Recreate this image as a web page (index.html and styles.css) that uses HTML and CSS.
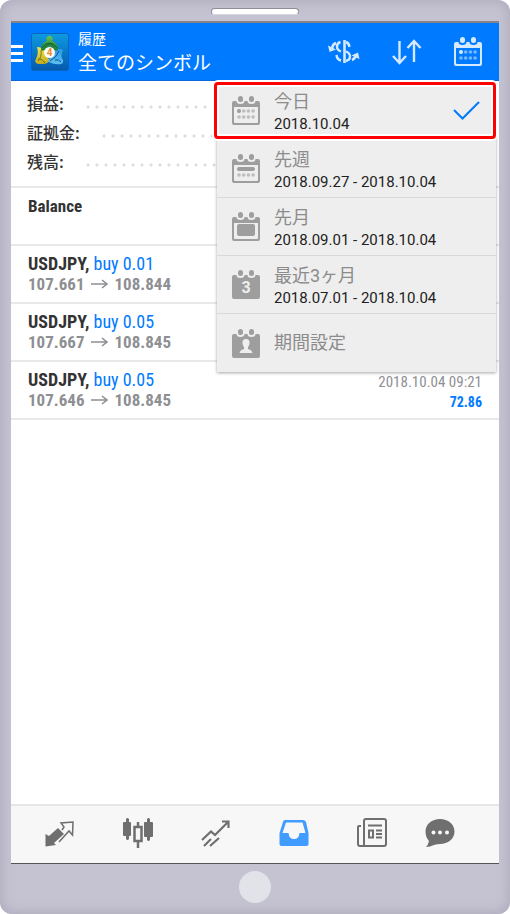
FILE: index.html
```
<!DOCTYPE html>
<html lang="ja">
<head>
<meta charset="utf-8">
<meta name="viewport" content="width=device-width, initial-scale=1">
<title>履歴</title>
<link rel="stylesheet" href="styles.css">
</head>
<body>
<svg class="defs" aria-hidden="true">
  <defs>
    <g id="cal-frame">
      <path fill-rule="evenodd" d="M2 5H4.500A4 3 0 0 0 12.500 5H15.500A4 3 0 0 0 23.500 5H26Q28 5 28 7V27Q28 29 26 29H2Q0 29 0 27V7Q0 5 2 5ZM2 11V26Q2 27 3 27H25Q26 27 26 26V11Z"/>
      <rect x="6" y="0" width="5" height="6" rx="2.5"/>
      <rect x="17" y="0" width="5" height="6" rx="2.5"/>
    </g>
    <g id="cal-solid">
      <path d="M2 5H4.500A4 3 0 0 0 12.500 5H15.500A4 3 0 0 0 23.500 5H26Q28 5 28 7V27Q28 29 26 29H2Q0 29 0 27V7Q0 5 2 5Z"/>
      <rect x="6" y="0" width="5" height="6" rx="2.5"/>
      <rect x="17" y="0" width="5" height="6" rx="2.5"/>
    </g>
    <g id="dots-row">
      <circle cx="7" cy="0" r="1.8"/><circle cx="11.7" cy="0" r="1.8"/><circle cx="16.4" cy="0" r="1.8"/><circle cx="21.1" cy="0" r="1.8"/>
    </g>
    <g id="to-arrow">
      <path d="M0 6H16M11 2L16 6L11 10" fill="none" stroke="currentColor" stroke-width="1.6"/>
    </g>
  </defs>
</svg>
<div class="phone">
  <div class="bezel-top"><span class="speaker"></span></div>
  <div class="screen">
    <header class="bar">
      <button class="burger" aria-label="メニュー"><span></span><span></span><span></span></button>
      <svg class="logo" viewBox="0 0 38 38" aria-hidden="true">
        <defs>
          <linearGradient id="lg" x1="0" y1="0" x2="0" y2="1"><stop offset="0" stop-color="#0d9be0"/><stop offset="1" stop-color="#0759ad"/></linearGradient>
          <linearGradient id="gr" x1="0" y1="0" x2="0" y2="1"><stop offset="0" stop-color="#6cc453"/><stop offset="1" stop-color="#157a38"/></linearGradient>
          <linearGradient id="ye" x1="0" y1="0" x2="0" y2="1"><stop offset="0" stop-color="#f2e650"/><stop offset="1" stop-color="#c2ab1c"/></linearGradient>
          <linearGradient id="bl" x1="0" y1="0" x2="0" y2="1"><stop offset="0" stop-color="#2f9be4"/><stop offset="1" stop-color="#5cc0f2"/></linearGradient>
        </defs>
        <rect x=".5" y=".5" width="37" height="37" rx="2" fill="url(#lg)" stroke="#0a63bd"/>
        <path d="M6 14Q11 14 14 18Q14 23 19 27Q17 31 12 31H7A3 3 0 0 1 5 26Q8 20 6 14Z" fill="url(#ye)"/>
        <path d="M24 17Q29 15 32 17Q29 23 32 27A3 3 0 0 1 30 31Q22 32 17 28L19 25Q23 23 24 17Z" fill="url(#bl)"/>
        <path d="M10 17Q10 10 16 8A3.200 3.200 0 1 1 21 8Q27 10 27 17Q23 19 18.500 13Q14 19 10 17Z" fill="url(#gr)"/>
        <path d="M11 15Q14 10 18.500 10Q23 10 26 15M14 14Q18.500 8 23 14" fill="none" stroke="#13602e"/>
        <path d="M10 17Q11 24 7 28M7 26Q11 25 14 30" fill="none" stroke="#7d741b"/>
        <path d="M28 18Q26 24 19 28M24 27Q28 26 30 29" fill="none" stroke="#0b559c"/>
        <circle cx="18.500" cy="19.500" r="5.500" fill="#fff"/>
        <text class="logo-num" x="18.500" y="23" text-anchor="middle">4</text>
      </svg>
      <h1 class="titles"><span class="sub">履歴</span><span class="main">全てのシンボル</span></h1>
      <nav class="actions">
        <button aria-label="通貨">
          <svg width="32" height="26" viewBox="0 0 32 26" fill="none" stroke="currentColor">
            <path d="M16.500 1V24" stroke-width="2.600"/>
            <path d="M12.500 3Q9 4 9 7.500Q9 11 13 12.500M18 3Q21 4 21.500 8M18 12.500Q22 14 22 17.500Q22 21 18 22M13 21.500Q9 20.500 8.500 16" stroke-width="2.400"/>
            <path d="M8 4Q5 5 4 9M24 21Q27 20 28 16" stroke-width="2.600"/>
            <path d="M0 6.500L1.500 13L8 10.500ZM23.500 16.500L30 13.500L31.500 20Z" fill="currentColor" stroke="none"/>
          </svg>
        </button>
        <button aria-label="並べ替え">
          <svg width="30" height="26" viewBox="0 0 30 26" fill="none" stroke="currentColor" stroke-width="2.400">
            <path d="M7.500 2V23M1 17L7.500 24L14 17M22 23V2M15.500 9L22 2L28.500 9"/>
          </svg>
        </button>
        <button aria-label="期間">
          <svg width="28" height="29" viewBox="0 0 28 29" fill="currentColor">
            <use href="#cal-frame"/>
            <circle cx="7" cy="15" r="2"/>
            <g opacity=".55"><use href="#dots-row" y="15"/><use href="#dots-row" y="21"/></g>
          </svg>
        </button>
      </nav>
    </header>

    <main class="content">
      <dl class="summary">
        <div><dt>損益:</dt><dd></dd></div>
        <div><dt>証拠金:</dt><dd></dd></div>
        <div><dt>残高:</dt><dd></dd></div>
      </dl>
      <ul class="deals">
        <li><div class="left"><p class="balance">Balance</p></div></li>
        <li><div class="left"><p class="sym"><b>USDJPY,</b> <span>buy 0.01</span></p><p class="price">107.661<svg viewBox="0 0 18 12" aria-hidden="true"><use href="#to-arrow"/></svg>108.844</p></div></li>
        <li><div class="left"><p class="sym"><b>USDJPY,</b> <span>buy 0.05</span></p><p class="price">107.667<svg viewBox="0 0 18 12" aria-hidden="true"><use href="#to-arrow"/></svg>108.845</p></div></li>
        <li><div class="left"><p class="sym"><b>USDJPY,</b> <span>buy 0.05</span></p><p class="price">107.646<svg viewBox="0 0 18 12" aria-hidden="true"><use href="#to-arrow"/></svg>108.845</p></div>
          <div class="right"><p class="time">2018.10.04 09:21</p><p class="profit">72.86</p></div></li>
      </ul>
    </main>

    <nav class="tabs">
      <button aria-label="気配値">
        <svg width="32" height="30" viewBox="0 0 32 30">
          <path fill="currentColor" d="M1.500 16L5 18L14 10L20 16L10 25L12 27L1.500 28.500Z"/>
          <path fill="none" stroke="currentColor" stroke-width="1.500" d="M18 12L20 9L17 5L29 4L28.500 17L25 13L15 24"/>
        </svg>
      </button>
      <button aria-label="チャート">
        <svg width="32" height="30" viewBox="0 0 32 30">
          <path fill="currentColor" d="M4 1Q5.500 -1 7 1V4H8Q9 4 9 5V17Q9 18 8 18H7V21Q5.500 23 4 21V18H2Q1 18 1 17V5Q1 4 2 4H4ZM25 1Q26.500 -1 28 1V4H30Q31 4 31 5V18Q31 19 30 19H28V22Q26.500 24 25 22V19H23Q22 19 22 18V5Q22 4 23 4H25Z"/>
          <path fill="none" stroke="currentColor" stroke-width="2.500" d="M16 4V9M16 24V30M12.500 9H19.500V23H12.500Z"/>
        </svg>
      </button>
      <button aria-label="トレード">
        <svg width="32" height="30" viewBox="0 0 32 30" fill="none" stroke="currentColor" stroke-width="2.200">
          <path d="M2 22L11 13.500L15 17L28 4M22 3.500H28.500V10M4 28L11 21M10 28L19 20"/>
        </svg>
      </button>
      <button class="active" aria-label="履歴">
        <svg width="32" height="30" viewBox="0 0 32 30">
          <path fill="currentColor" fill-rule="evenodd" d="M7 2H25Q27 2 28 4L30.500 15V26Q30.500 28 28.500 28H3.500Q1.500 28 1.500 26V15L5 4Q5.500 2 7 2ZM8 4.500L4.500 15H10.500Q11 21 16 21Q21 21 21.500 15H27.500L24.500 4.500Z"/>
        </svg>
      </button>
      <button aria-label="ニュース">
        <svg width="32" height="30" viewBox="0 0 32 30" fill="none" stroke="currentColor" stroke-width="2">
          <path d="M8 3Q8 1 10 1H28Q30 1 30 3V26Q30 28 28 28H4Q2 28 2 26V9Q2 8 3 8H5M8 3V28M12 7.500H26M20 12.500H26M20 16H26M20 19.500H26"/>
          <path d="M13 12.500H17V19.500H13Z"/>
        </svg>
      </button>
      <button aria-label="メッセージ">
        <svg width="32" height="30" viewBox="0 0 32 30">
          <path fill="currentColor" d="M16 1C24 1 30.500 6 30.500 13.500S24 26 16 26Q13 26 10 27Q6 29 2 29Q4 27 5 23Q1.500 19 1.500 13.500C1.500 6 8 1 16 1Z"/>
          <g fill="#f7f7f7"><circle cx="9.500" cy="14.500" r="2"/><circle cx="16" cy="14.500" r="2"/><circle cx="23" cy="14.500" r="2"/></g>
        </svg>
      </button>
    </nav>

    <div class="menu">
      <button class="item selected">
        <svg class="cal" viewBox="0 0 28 29"><use href="#cal-frame"/><circle cx="7" cy="15" r="2"/><g opacity=".6"><use href="#dots-row" y="15"/><use href="#dots-row" y="21"/></g></svg>
        <span class="text"><span class="name">今日</span><span class="range">2018.10.04</span></span>
        <svg class="check" viewBox="0 0 28 20" fill="none" stroke="currentColor" stroke-width="2"><path d="M1 9L9.500 17.500L26 1"/></svg>
      </button>
      <button class="item">
        <svg class="cal" viewBox="0 0 28 29"><use href="#cal-frame"/><rect x="5" y="13" width="18" height="4" rx="2"/><g opacity=".6"><use href="#dots-row" y="21"/></g></svg>
        <span class="text"><span class="name">先週</span><span class="range">2018.09.27 - 2018.10.04</span></span>
      </button>
      <button class="item">
        <svg class="cal" viewBox="0 0 28 29"><use href="#cal-frame"/><rect x="5" y="12" width="18" height="12" rx="2"/></svg>
        <span class="text"><span class="name">先月</span><span class="range">2018.09.01 - 2018.10.04</span></span>
      </button>
      <button class="item">
        <svg class="cal" viewBox="0 0 28 29"><use href="#cal-solid"/><text class="cal-num" x="14" y="23" text-anchor="middle">3</text></svg>
        <span class="text"><span class="name">最近3ヶ月</span><span class="range">2018.07.01 - 2018.10.04</span></span>
      </button>
      <button class="item">
        <svg class="cal" viewBox="0 0 28 29"><use href="#cal-solid"/><path fill="#eee" d="M14 10Q18 10 17.500 14.500Q17 17 16 18V20Q20 21 20.500 24H7.500Q8 21 12 20V18Q11 17 10.500 14.500Q10 10 14 10Z"/></svg>
        <span class="text"><span class="name">期間設定</span></span>
      </button>
    </div>
  </div>
  <div class="bezel-bottom"><span class="home"></span></div>
</div>
</body>
</html>
```
FILE: styles.css
```
* { box-sizing: border-box; margin: 0; padding: 0; }

body {
  background: #fff;
  font-family: Roboto, "Noto Sans CJK JP", sans-serif;
}

button {
  border: 0;
  background: none;
  color: inherit;
  font: inherit;
  text-align: left;
}

svg { display: block; flex: none; }
.defs { position: absolute; width: 0; height: 0; }

.phone {
  display: flex;
  flex-direction: column;
  min-height: 100vh;
  padding: 0 11px;
  border-radius: 12px;
  background: #c5c3d1;
  box-shadow: inset 0 0 14px #a8a5b8;
}

.bezel-top {
  display: flex;
  justify-content: center;
  height: 23px;
  padding-top: 8px;
  border-bottom: 2px solid #858489;
}

.speaker {
  width: 88px;
  height: 7px;
  border: 1px solid #8f8d96;
  border-bottom-color: #d8d7df;
  border-radius: 4px;
  background: #fff;
}

.bezel-bottom {
  display: flex;
  justify-content: center;
  height: 51px;
  padding-top: 7px;
  border-top: 1px solid #55555a;
}

.home {
  width: 32px;
  height: 32px;
  border-radius: 50%;
  background: #e2e2e9;
}

.screen {
  position: relative;
  display: flex;
  flex: 1;
  flex-direction: column;
  background: #fff;
}

.bar {
  display: flex;
  align-items: center;
  height: 58px;
  border-bottom: 1px solid #0868dc;
  background: #007aff;
  color: #fff;
}

.burger {
  display: flex;
  flex-direction: column;
  gap: 4px;
  width: 12px;
  margin-top: 3px;
}
.burger span { height: 3px; background: #fff; }

.logo { width: 38px; height: 38px; margin: 1px 9px 0 8px; }
.logo-num { fill: #f08a1c; font: bold 10px Roboto, sans-serif; }

.titles {
  display: flex;
  flex: 1;
  flex-direction: column;
  padding-top: 5px;
  font-weight: 400;
  white-space: nowrap;
}
.titles .sub { font-size: 14px; line-height: 19px; }
.titles .main { font-size: 19px; line-height: 30px; }

.actions {
  display: flex;
  align-items: center;
  gap: 32px;
  padding-right: 17px;
  color: #d5e9ff;
}

.content { flex: 1; }

.summary {
  padding: 8px 16px 10px;
  border-bottom: 2px solid #e8e8e8;
}
.summary div {
  display: flex;
  gap: 20px;
  height: 29px;
}
.summary dt {
  color: #333;
  font: 500 16px/29px "Noto Sans CJK JP", sans-serif;
}
.summary dd {
  flex: 1;
  background: radial-gradient(circle at 4px 18px, #ddd 1px, transparent 2px) 0 0 / 9px 29px;
}

.deals {
  list-style: none;
  font-family: "Roboto Condensed", "Liberation Sans Narrow", Roboto, sans-serif;
}
.deals li {
  display: flex;
  justify-content: space-between;
  height: 58px;
  padding: 8px 17px 0;
  border-bottom: 2px solid #e8e8e8;
}
.deals p { line-height: 20px; white-space: nowrap; }
.balance { color: #333; font-size: 17px; font-weight: 700; }
.sym { color: #333; font-size: 18px; }
.sym span { color: #007aff; }
.price {
  display: flex;
  align-items: center;
  gap: 6px;
  color: #8e8f93;
  font-size: 17px;
  font-weight: 700;
}
.price svg { width: 18px; height: 12px; }
.right { padding-top: 2px; text-align: right; }
.time { color: #8e8f93; font-size: 15px; }
.profit { color: #007aff; font-size: 14px; font-weight: 700; }

.tabs {
  display: grid;
  grid-template-columns: repeat(5, 4fr) 3fr;
  align-items: center;
  height: 59px;
  padding: 0 30px 4px 10px;
  border-top: 2px solid #e6e6e6;
  background: #f7f7f7;
  color: #6f6f6f;
}
.tabs button { display: flex; justify-content: center; }
.tabs .active { color: #409cff; }

.menu {
  position: absolute;
  top: 59px;
  right: 3px;
  width: 279px;
  background: #eee;
  box-shadow: 0 1px 3px rgba(0, 0, 0, .35);
}

.item {
  position: relative;
  display: flex;
  align-items: center;
  gap: 14px;
  width: 100%;
  height: 58px;
  padding: 0 15px;
  border-bottom: 1px solid #d8d8d8;
}
.item:last-child { border-bottom: 0; }
.text { display: flex; flex: 1; flex-direction: column; padding-top: 4px; white-space: nowrap; }
.item:last-child .text { padding-top: 0; }
.name { color: #8c8c8c; font: 18px/24px "Roboto", "Noto Sans CJK JP", sans-serif; }
.range { color: #222; font-size: 15px; line-height: 21px; }
.cal { width: 28px; height: 29px; fill: #9e9e9e; }
.cal-num { fill: #eee; font: bold 16px Roboto, sans-serif; }
.check { width: 28px; height: 20px; color: #007aff; }

.selected::after {
  content: "";
  position: absolute;
  inset: 0 0 0 -3px;
  border: 3px solid #f00;
  border-radius: 4px;
  box-shadow: 0 0 0 2px #fff, inset 0 0 0 2px #fff;
}
```
